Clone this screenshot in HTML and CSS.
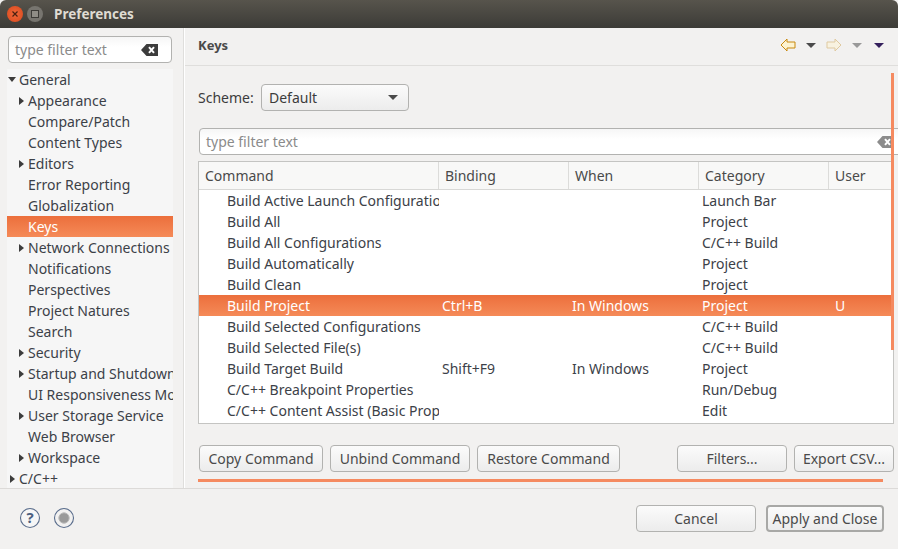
FILE: index.html
```html
<!DOCTYPE html>
<html lang="en">
<head>
  <meta charset="UTF-8">
  <title>Preferences</title>
  <link rel="stylesheet" href="styles.css">
</head>
<body>

<div class="window">
  <div class="titlebar">
    <span class="win-btn close">
      <svg width="8" height="8" viewBox="0 0 8 8"><path d="M1.5 1.5l5 5M6.5 1.5l-5 5" stroke="#4a2010" stroke-width="1.2"/></svg>
    </span>
    <span class="win-btn max"><span class="max-box"></span></span>
    <span class="title">Preferences</span>
  </div>

  <div class="main">
    <div class="sidebar">
      <div class="filter side-filter">
        <span class="placeholder">type filter text</span>
        <svg class="clear" width="17" height="12" viewBox="0 0 17 12"><path d="M0 6L5.5 0H17V12H5.5Z" fill="#3c3c3c"/><path d="M8 3.2l5 5.6M13 3.2l-5 5.6" stroke="#fff" stroke-width="2"/></svg>
      </div>
      <div class="tree">
        <div class="node"><span class="arrow down"></span>General</div>
        <div class="node sub"><span class="arrow"></span>Appearance</div>
        <div class="node sub"><span class="arrow none"></span>Compare/Patch</div>
        <div class="node sub"><span class="arrow none"></span>Content Types</div>
        <div class="node sub"><span class="arrow"></span>Editors</div>
        <div class="node sub"><span class="arrow none"></span>Error Reporting</div>
        <div class="node sub"><span class="arrow none"></span>Globalization</div>
        <div class="node sub selected"><span class="arrow none"></span>Keys</div>
        <div class="node sub"><span class="arrow"></span>Network Connections</div>
        <div class="node sub"><span class="arrow none"></span>Notifications</div>
        <div class="node sub"><span class="arrow none"></span>Perspectives</div>
        <div class="node sub"><span class="arrow none"></span>Project Natures</div>
        <div class="node sub"><span class="arrow none"></span>Search</div>
        <div class="node sub"><span class="arrow"></span>Security</div>
        <div class="node sub"><span class="arrow"></span>Startup and Shutdown</div>
        <div class="node sub"><span class="arrow none"></span>UI Responsiveness Monitoring</div>
        <div class="node sub"><span class="arrow"></span>User Storage Service</div>
        <div class="node sub"><span class="arrow none"></span>Web Browser</div>
        <div class="node sub"><span class="arrow"></span>Workspace</div>
        <div class="node"><span class="arrow"></span>C/C++</div>
      </div>
    </div>

    <div class="panel">
      <div class="panel-head">
        <span class="panel-title">Keys</span>
        <div class="nav">
          <svg width="16" height="14" viewBox="0 0 16 14"><path d="M1 7L7 1V4H15V10H7V13Z" fill="#fdf3d0" stroke="#c8890f"/></svg>
          <span class="caret dark"></span>
          <svg class="fwd" width="16" height="14" viewBox="0 0 16 14"><path d="M15 7L9 1V4H1V10H9V13Z" fill="#f8f2e0" stroke="#dfc9a0"/></svg>
          <span class="caret grey"></span>
          <span class="caret purple"></span>
        </div>
      </div>

      <div class="content">
        <span class="vscroll"></span>
        <div class="scheme-row">
          <label class="scheme-label">Scheme:</label>
          <div class="combo">Default<span class="caret dark small"></span></div>
        </div>

        <div class="filter key-filter">
          <span class="placeholder">type filter text</span>
          <svg class="clear" width="17" height="12" viewBox="0 0 17 12"><path d="M0 6L5.5 0H17V12H5.5Z" fill="#8c8c8c"/><path d="M8 3.2l5 5.6M13 3.2l-5 5.6" stroke="#fff" stroke-width="2"/></svg>
        </div>

        <div class="table">
          <div class="row header">
            <span>Command</span><span>Binding</span><span>When</span><span>Category</span><span>User</span>
          </div>
          <div class="row"><span>Build Active Launch Configuration</span><span></span><span></span><span>Launch Bar</span><span></span></div>
          <div class="row"><span>Build All</span><span></span><span></span><span>Project</span><span></span></div>
          <div class="row"><span>Build All Configurations</span><span></span><span></span><span>C/C++ Build</span><span></span></div>
          <div class="row"><span>Build Automatically</span><span></span><span></span><span>Project</span><span></span></div>
          <div class="row"><span>Build Clean</span><span></span><span></span><span>Project</span><span></span></div>
          <div class="row selected"><span>Build Project</span><span>Ctrl+B</span><span>In Windows</span><span>Project</span><span>U</span></div>
          <div class="row"><span>Build Selected Configurations</span><span></span><span></span><span>C/C++ Build</span><span></span></div>
          <div class="row"><span>Build Selected File(s)</span><span></span><span></span><span>C/C++ Build</span><span></span></div>
          <div class="row"><span>Build Target Build</span><span>Shift+F9</span><span>In Windows</span><span>Project</span><span></span></div>
          <div class="row"><span>C/C++ Breakpoint Properties</span><span></span><span></span><span>Run/Debug</span><span></span></div>
          <div class="row"><span>C/C++ Content Assist (Basic Proposals)</span><span></span><span></span><span>Edit</span><span></span></div>
        </div>

        <div class="actions">
          <button class="btn copy">Copy Command</button>
          <button class="btn unbind">Unbind Command</button>
          <button class="btn restore">Restore Command</button>
          <button class="btn filters">Filters...</button>
          <button class="btn export">Export CSV...</button>
        </div>
        <div class="hscroll"></div>
      </div>
    </div>
  </div>

  <div class="footer">
    <svg width="22" height="22" viewBox="0 0 22 22"><circle cx="11" cy="11" r="9.5" fill="#f6f6f6" stroke="#5a6d8c" stroke-width="1.1"/><text x="11" y="16" text-anchor="middle" class="help-mark">?</text></svg>
    <svg class="record" width="22" height="22" viewBox="0 0 22 22"><circle cx="11" cy="11" r="9.5" fill="#f2f1f0" stroke="#5a6d8c" stroke-width="1.1"/><circle cx="11" cy="11" r="5.2" fill="#9a9a9a" stroke="#bbb"/></svg>
    <div class="footer-btns">
      <button class="btn cancel">Cancel</button>
      <button class="btn apply">Apply and Close</button>
    </div>
  </div>
</div>

</body>
</html>
```

FILE: styles.css
```css
html, body { margin: 0; padding: 0; }
body {
  width: 898px;
  height: 549px;
  overflow: hidden;
  background-color: #f2f1f0;
  color: #3c3c3c;
  font-family: "Noto Sans", sans-serif;
  font-size: 14px;
}
.window { display: flex; flex-direction: column; height: 549px; }

.titlebar {
  height: 28px;
  display: flex;
  align-items: center;
  background: linear-gradient(#57544c, #3c3b37);
  border-radius: 6px 6px 0 0;
}
.win-btn {
  width: 16px;
  height: 16px;
  border-radius: 50%;
  display: flex;
  align-items: center;
  justify-content: center;
}
.win-btn.close { margin-left: 7px; background: radial-gradient(#f0683a, #d8481c); }
.win-btn.max { margin-left: 4px; background: #77756f; }
.max-box { width: 6px; height: 6px; border: 1px solid #3c3b37; background: #8f8d86; }
.title { margin-left: 11px; color: #dfdbd2; font-weight: 700; font-size: 13.5px; }

.main { flex: 1; display: flex; min-height: 0; border-bottom: 1px solid #dcdad8; }
.sidebar { width: 183px; flex: none; border-right: 1px solid #dfdedc; box-shadow: 1px 0 0 #fff; display: flex; flex-direction: column; overflow: hidden; }

.filter {
  height: 27px;
  box-sizing: border-box;
  display: flex;
  align-items: center;
  justify-content: space-between;
  border: 1px solid #b2b2b0;
  border-radius: 4px;
  background: linear-gradient(#f6f6f6, #fff 40%);
  padding: 0 13px 0 6px;
}
.placeholder { color: #8b8b8b; font-size: 14px; }
.side-filter { width: 164px; margin: 8px 0 6px 8px; }

.tree { width: 166px; margin-left: 7px; background: #f6f6f6; flex: 1; overflow: hidden; }
.node { height: 21px; line-height: 21px; white-space: nowrap; display: flex; align-items: center; color: #3c4148; overflow: hidden; }
.node.sub { padding-left: 9px; }
.node.selected { background: linear-gradient(#ec6f3c, #f58a58); color: #fff; }
.arrow {
  width: 0;
  height: 0;
  flex: none;
  margin: 0 4px 0 3px;
  border-left: 5px solid #3c3c3c;
  border-top: 4px solid transparent;
  border-bottom: 4px solid transparent;
}
.arrow.down {
  margin: 0 3px 0 1px;
  border-left: 4.5px solid transparent;
  border-right: 4.5px solid transparent;
  border-top: 5px solid #3c3c3c;
  border-bottom: 0;
}
.arrow.none { border-left-color: transparent; }

.panel { flex: 1; min-width: 0; overflow: hidden; margin-left: 1px; }
.panel-head {
  height: 38px;
  box-sizing: border-box;
  display: flex;
  align-items: center;
  justify-content: space-between;
  border-bottom: 1px solid #dfdedc;
  padding: 0 14px 3px 13px;
}
.panel-title { font-weight: 700; font-size: 13px; color: #4a4a4a; }
.nav { display: flex; align-items: center; gap: 10px; }
.caret {
  width: 0;
  height: 0;
  border-left: 5px solid transparent;
  border-right: 5px solid transparent;
  border-top: 5px solid #4a4a4a;
}
.caret.grey { border-top-color: #999; }
.caret.purple { border-top-color: #35205c; margin-left: 2px; }
.caret.small { border-left-width: 5px; border-right-width: 5px; }

.content { position: relative; padding: 18px 0 0 13px; width: 720px; }
.vscroll { position: absolute; left: 706px; top: 7px; width: 3px; height: 277px; background: #f58a60; }

.scheme-row { display: flex; align-items: center; height: 27px; }
.scheme-label { width: 63px; }
.combo {
  width: 148px;
  height: 27px;
  box-sizing: border-box;
  display: flex;
  align-items: center;
  justify-content: space-between;
  padding: 0 10px 0 7px;
  border: 1px solid #b2b2b0;
  border-radius: 4px;
  background: linear-gradient(#fbfbfb, #ececec);
}

.key-filter { width: 720px; margin: 17px 0 6px 1px; padding-right: 24px; }
.table { width: 696px; height: 263px; box-sizing: border-box; background: #fff; border: 1px solid #c4c4c2; overflow: hidden; }
.row {
  display: grid;
  grid-template-columns: 240px 130px 130px 130px 1fr;
  height: 21px;
  line-height: 21px;
  color: #3c4148;
  white-space: nowrap;
}
.row span { overflow: hidden; padding-left: 3px; }
.row span:first-child { padding-left: 28px; }
.row span:last-child { padding-left: 6px; }
.row.selected { background: linear-gradient(#ec6f3c, #f58a58); color: #fff; }
.row.header { height: 28px; line-height: 27px; background: #f8f8f7; border-bottom: 1px solid #d8d8d6; box-sizing: border-box; margin-bottom: 0; color: #4a4a4a; }
.row.header span { padding-left: 6px; border-right: 1px solid #dcdcda; }
.row.header span:last-child { border-right: 0; }

.actions { display: flex; margin: 21px 0 0 1px; gap: 7px; width: 720px; }
.btn {
  height: 27px;
  box-sizing: border-box;
  padding: 0;
  flex: none;
  border: 1px solid #b2b2b0;
  border-radius: 4px;
  background: linear-gradient(#fbfbfb, #ececec);
  color: #4a4a4a;
  font-family: "Noto Sans", sans-serif;
  font-size: 14px;
}
.btn.copy { width: 124px; }
.btn.unbind { width: 140px; }
.btn.restore { width: 143px; }
.btn.filters { width: 110px; margin-left: 50px; }
.btn.export { width: 100px; }
.hscroll { width: 685px; height: 3px; margin-top: 7px; background: #f58a60; }

.footer { height: 60px; flex: none; display: flex; align-items: center; padding: 0 14px 2px 19px; box-sizing: border-box; }
.help-mark { font-family: "Noto Sans", sans-serif; font-weight: 700; font-size: 15px; fill: #4c5f80; }
.record { margin-left: 12px; }
.footer-btns { margin-left: auto; display: flex; gap: 10px; }
.btn.cancel { width: 120px; }
.btn.apply { width: 118px; border: 2px solid #a8a8a6; }
```
